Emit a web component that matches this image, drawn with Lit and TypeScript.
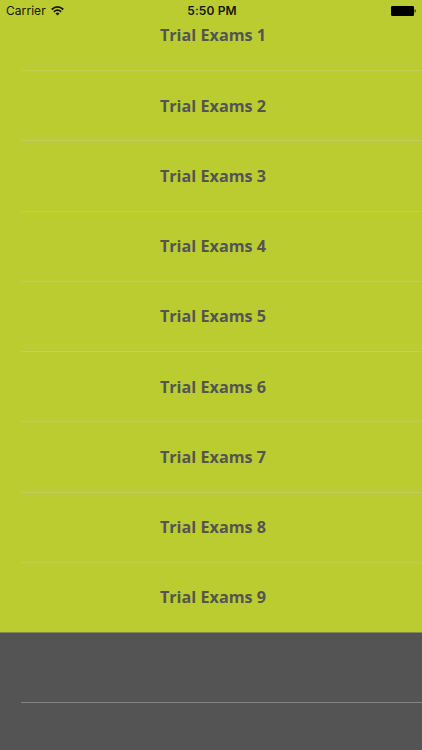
import { LitElement, html, css } from "lit";
import { customElement } from "lit/decorators.js";

@customElement("app-root")
export class AppRoot extends LitElement {
  static styles = css`
    :host { display: block; position: relative; width: 422px; height: 750px; overflow: hidden; background: #545454; }
    .status { position: absolute; inset: 0 0 auto 0; height: 22px; display: grid; grid-template-columns: 1fr auto 1fr; align-items: center; box-sizing: border-box; padding: 0 6px; font: 12px/22px Inter, sans-serif; color: #141604; }
    .left { display: flex; align-items: center; gap: 5px; letter-spacing: 0.06px; }
    .time { font-weight: 600; letter-spacing: 0.12px; padding-left: 2px; }
    .right { display: flex; justify-content: flex-end; }
    svg { display: block; }
    .list { display: flex; flex-direction: column; }
    .row { height: 70.22px; box-sizing: border-box; flex: none; display: flex; align-items: center; justify-content: center; padding: 0.6px 0 0 4px; background: #bbcc31; color: #545454; font: 700 16.2px/22px "Open Sans", sans-serif; position: relative; }
    .row::after { content: ""; position: absolute; z-index: 1; left: 21px; right: 0; bottom: -1px; height: 1px; background: #c3ce55; }
    .row.last::after { left: 0; background: #858b50; }
    .row.empty { background: #545454; }
    .row.empty::after { background: #838583; }
  `;

  render() {
    return html`
      <div class="list">
        ${[1, 2, 3, 4, 5, 6, 7, 8, 9].map((n) => html`<div class="row ${n === 9 ? "last" : ""}">Trial Exams ${n}</div>`)}
        <div class="row empty"></div>
      </div>
      <div class="status">
        <div class="left"><span>Carrier</span>
          <svg width="13" height="10" viewBox="0 0 13 10" fill="none" stroke="#141604" stroke-width="1.7"><path d="M.7 3.5Q6.5-1.7 12.3 3.5M2.8 5.8Q6.5 2.5 10.2 5.8"/><path d="M6.5 9.5L4.5 7.4Q6.5 5.8 8.5 7.4Z" fill="#141604" stroke="none"/></svg>
        </div>
        <span class="time">5:50 PM</span>
        <div class="right"><svg width="25" height="10" viewBox="0 0 25 10"><rect width="23" height="10" rx="1.2"/><path d="M23.7 3Q25.8 5 23.7 7Z"/></svg></div>
      </div>`;
  }
}
